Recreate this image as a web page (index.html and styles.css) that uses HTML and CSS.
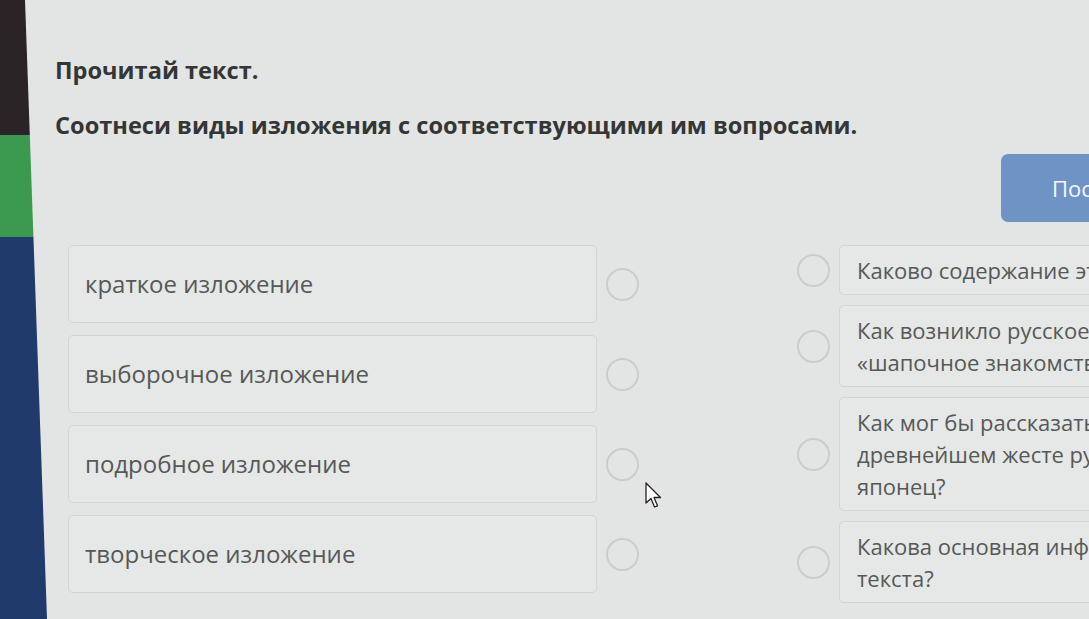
FILE: index.html
```html
<!DOCTYPE html>
<html>
<head>
    <link rel="stylesheet" href="styles.css">
</head>
<body>
  <div class="app">
    <div class="sidebar"></div>
    <div class="main">
      <h1 class="title">Прочитай текст.</h1>
      <h2 class="title task">Соотнеси виды изложения с соответствующими им вопросами.</h2>

      <div class="toolbar">
        <button class="send">Послать</button>
      </div>

      <div class="board">
        <div class="col left">
          <div class="item">
            <div class="card">краткое изложение</div>
            <span class="dot"></span>
          </div>
          <div class="item">
            <div class="card">выборочное изложение</div>
            <span class="dot"></span>
          </div>
          <div class="item">
            <div class="card">подробное изложение</div>
            <span class="dot"></span>
          </div>
          <div class="item">
            <div class="card">творческое изложение</div>
            <span class="dot"></span>
          </div>
        </div>

        <div class="col right">
          <div class="item">
            <span class="dot"></span>
            <div class="card">Каково содержание этого текста?</div>
          </div>
          <div class="item">
            <span class="dot"></span>
            <div class="card">Как возникло русское выражение «шапочное знакомство»?</div>
          </div>
          <div class="item">
            <span class="dot"></span>
            <div class="card">Как мог бы рассказать о древнейшем жесте русских японец?</div>
          </div>
          <div class="item">
            <span class="dot"></span>
            <div class="card">Какова основная информация текста?</div>
          </div>
        </div>

        <svg class="cursor" width="18" height="28" viewBox="0 0 18 28">
          <path d="M1 1 L1 21 L6 16.5 L9.5 25 L12.5 23.8 L9 15.5 L15.5 15.5 Z" fill="#fff" stroke="#222" stroke-width="1.3" stroke-linejoin="round"/>
        </svg>
      </div>
    </div>
  </div>
</body>
</html>
```

FILE: styles.css
```css
body {
    margin: 0;
    background-color: #e2e5e3;
    font-family: "Open Sans", "Noto Sans", sans-serif;
    overflow: hidden;
}

.app {
    display: flex;
    height: 619px;
}

.sidebar {
    flex: none;
    width: 47px;
    background: linear-gradient(to bottom, #2b2427 0, #2b2427 135px, #3b9a50 135px, #3b9a50 237px, #1f3a6b 237px);
    clip-path: polygon(0 0, 25px 0, 47px 100%, 0 100%);
}

.main {
    flex: none;
    width: 1110px;
    padding: 54px 0 0 8px;
}

.title {
    margin: 0;
    font-size: 23.6px;
    line-height: 32px;
    font-weight: 700;
    color: #343636;
}

.task {
    margin-top: 23px;
}

.toolbar {
    display: flex;
    justify-content: flex-end;
    margin-top: 13px;
}

.send {
    width: 164px;
    height: 68px;
    padding: 0 0 0 51px;
    border: none;
    border-radius: 7px;
    background-color: #6e93c5;
    color: #f4f7fb;
    font-family: inherit;
    font-size: 22px;
    text-align: left;
}

.board {
    position: relative;
    display: flex;
    margin-top: 23px;
}

.col {
    display: flex;
    flex-direction: column;
    gap: 10px;
}

.left {
    margin-left: 13px;
    gap: 12px;
}

.right {
    margin-left: 158px;
}

.item {
    display: flex;
    align-items: center;
}

.card {
    box-sizing: border-box;
    border: 1px solid #d2d5d3;
    border-radius: 5px;
    background-color: #e5e8e6;
    color: #565858;
    font-size: 24px;
    line-height: 32px;
}

.left .card {
    width: 529px;
    height: 78px;
    padding: 0 16px;
    display: flex;
    align-items: center;
}

.right .card {
    width: 420px;
    padding: 8px 17px;
    font-size: 22px;
}

.dot {
    flex: none;
    width: 29px;
    height: 29px;
    border: 2px solid #c9cdcb;
    border-radius: 50%;
}

.left .dot {
    margin-left: 9px;
}

.right .dot {
    margin-right: 9px;
}

.cursor {
    position: absolute;
    left: 590px;
    top: 237px;
}
```
